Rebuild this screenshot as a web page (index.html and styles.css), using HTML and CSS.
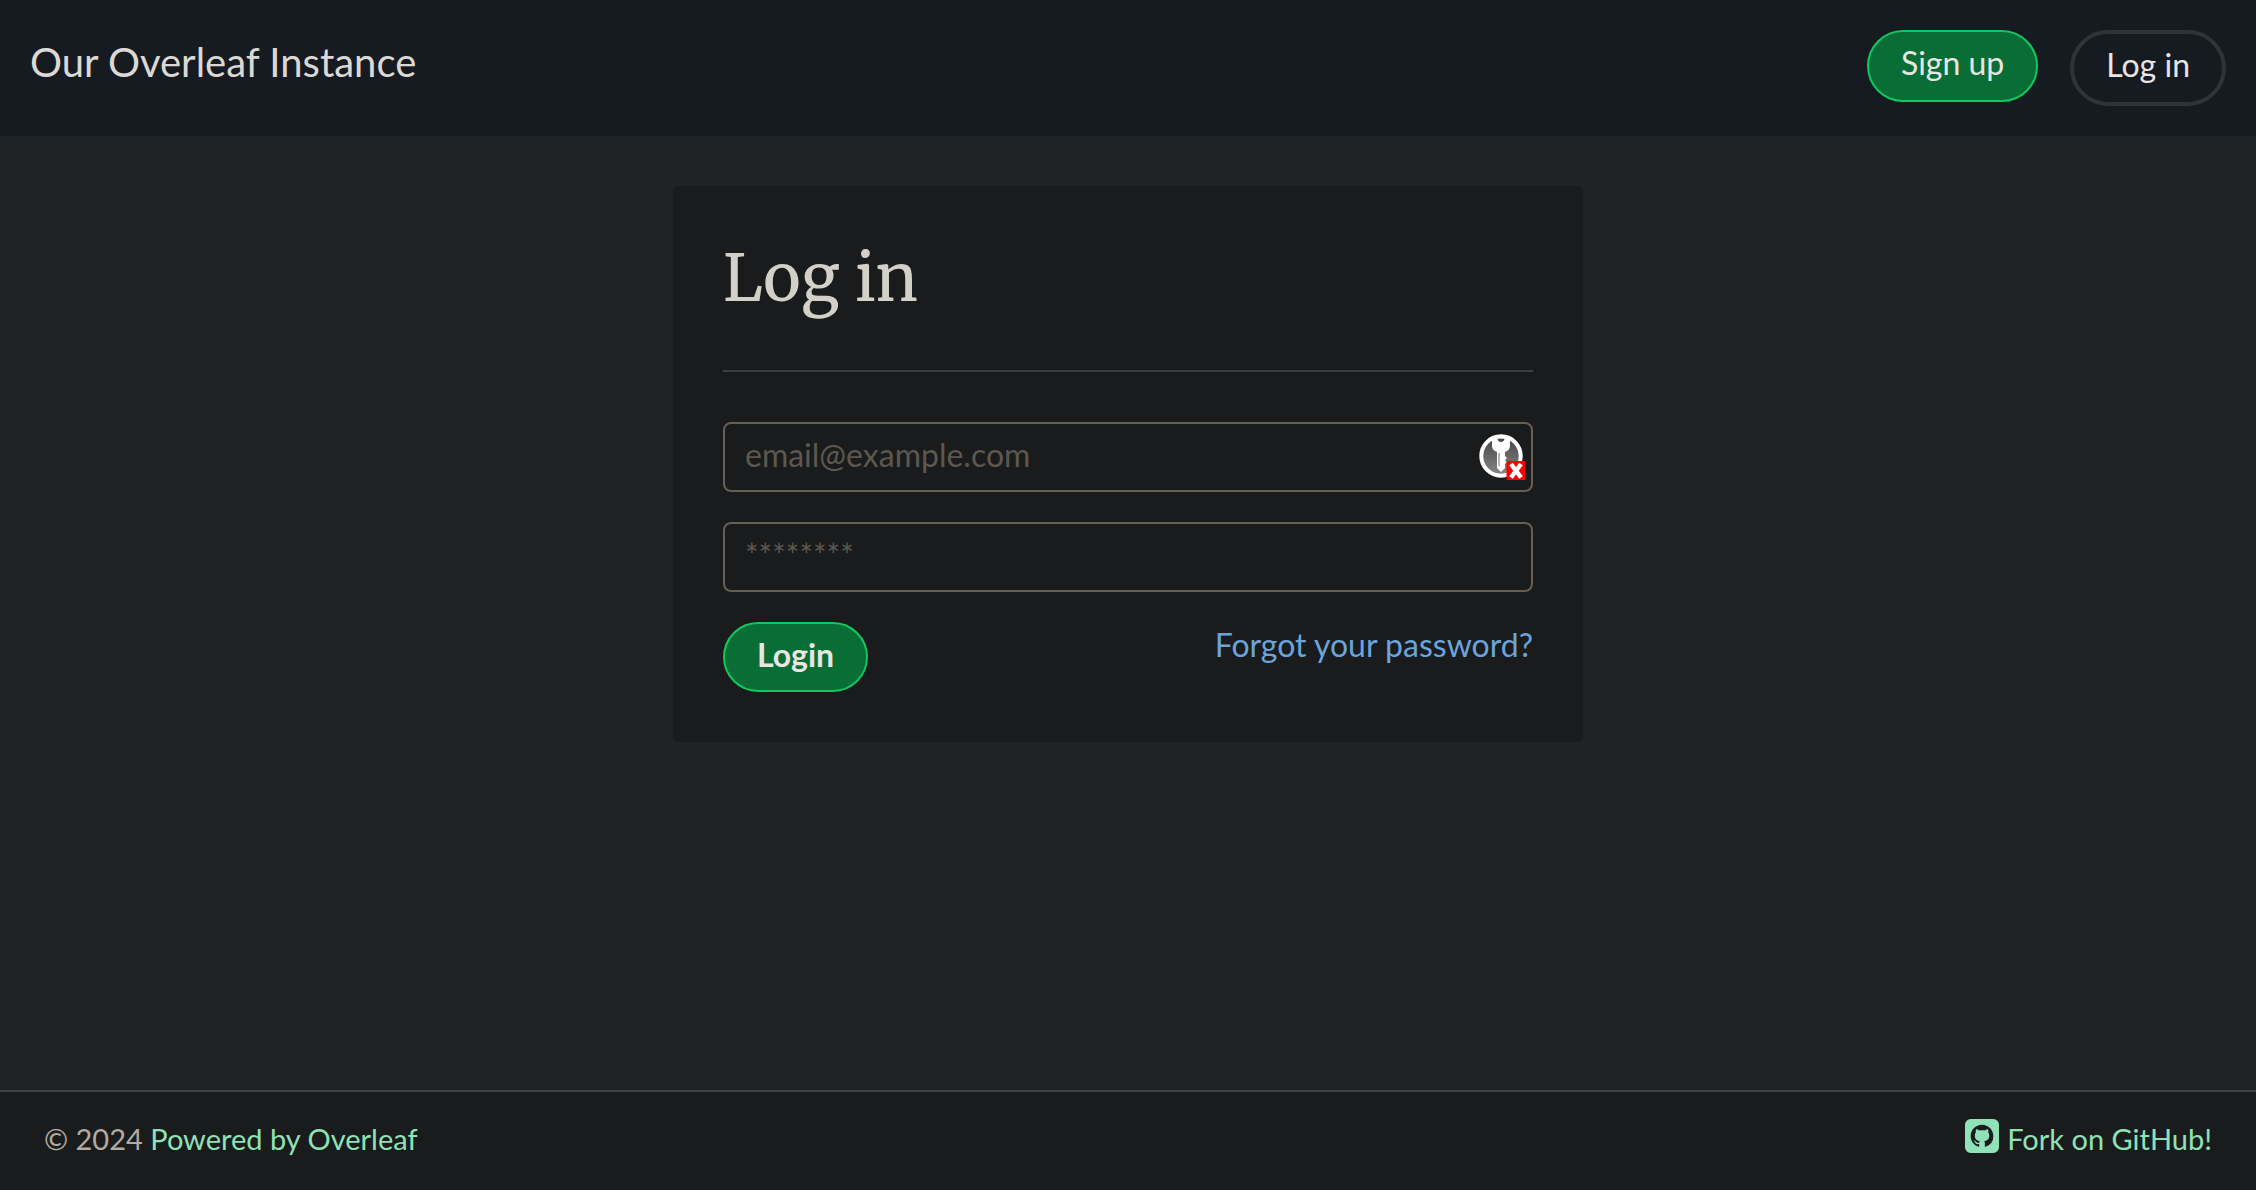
FILE: index.html
```html
<!DOCTYPE html>
<html lang="en">
<head>
	<meta charset="UTF-8">
	<meta name="viewport" content="width=device-width, initial-scale=1">
	<title>Log in - Our Overleaf Instance</title>
	<link rel="stylesheet" href="styles.css">
</head>
<body>
<header class="navbar">
	<a class="navbar-title" href="#">Our Overleaf Instance</a>
	<nav class="navbar-links">
		<a class="btn btn-primary" href="#">Sign up</a>
		<a class="btn btn-outline" href="#">Log in</a>
	</nav>
</header>
<main class="content">
	<div class="card">
		<div class="page-header">
			<h1>Log in</h1>
		</div>
		<form class="login-form">
			<div class="form-group">
				<input class="form-control" type="email" name="email" placeholder="email@example.com" aria-label="Email">
				<svg class="key-icon" viewBox="0 0 48 48" aria-hidden="true">
					<defs>
						<linearGradient id="key-bg" x1="0" y1="0" x2="0" y2="1">
							<stop offset="0" stop-color="#444"/>
							<stop offset="1" stop-color="#888"/>
						</linearGradient>
					</defs>
					<circle cx="22" cy="22" r="19.7" fill="url(#key-bg)" stroke="#fff" stroke-width="4"/>
					<path fill="#fff" fill-rule="evenodd" d="M13 4h18v8c0 3-2 5-5 6v4l2 2-2 2 2 2-2 2v4l-4 4-4-4V18c-3-1-5-3-5-6zM18.500 4.500c0 2 1.500 3.500 3.500 3.500s3.500-1.500 3.500-3.500zM19.500 19v13h1V19z"/>
					<rect x="27.500" y="27" width="18.500" height="19" fill="#f00"/>
					<path d="M32 30l10 13.500M42 30L32 43.500" stroke="#fff" stroke-width="4.500"/>
				</svg>
			</div>
			<div class="form-group">
				<input class="form-control" type="password" name="password" placeholder="********" aria-label="Password">
			</div>
			<div class="actions">
				<button class="btn btn-primary btn-submit" type="submit">Login</button>
				<a class="forgot" href="#">Forgot your password?</a>
			</div>
		</form>
	</div>
</main>
<footer class="site-footer">
	<div>© 2024 <a href="#">Powered by Overleaf</a></div>
	<a class="fork" href="#">
		<svg class="github-icon" viewBox="0 0 24 24" aria-hidden="true">
			<path fill="currentColor" fill-rule="evenodd" d="M4 0h16a4 4 0 0 1 4 4v16a4 4 0 0 1-4 4H4a4 4 0 0 1-4-4V4a4 4 0 0 1 4-4zM12 4C7.58 4 4 7.58 4 12c0 3.54 2.29 6.53 5.47 7.59.4.07.55-.17.55-.38 0-.19-.01-.82-.01-1.49-2.01.37-2.53-.49-2.69-.94-.09-.23-.48-.94-.82-1.13-.28-.15-.68-.52-.01-.53.63-.01 1.08.58 1.23.82.72 1.21 1.87.87 2.33.66.07-.52.28-.87.51-1.07-1.78-.2-3.64-.89-3.64-3.95 0-.87.31-1.59.82-2.15-.08-.2-.36-1.02.08-2.12 0 0 .67-.21 2.2.82.64-.18 1.32-.27 2-.27.68 0 1.36.09 2 .27 1.53-1.04 2.2-.82 2.2-.82.44 1.1.16 1.92.08 2.12.51.56.82 1.27.82 2.15 0 3.07-1.87 3.75-3.65 3.95.29.25.54.73.54 1.48 0 1.07-.01 1.93-.01 2.2 0 .21.15.46.55.38A8.013 8.013 0 0 0 20 12c0-4.42-3.58-8-8-8z"/>
		</svg>
		Fork on GitHub!
	</a>
</footer>
</body>
</html>
```
FILE: styles.css
```css
*{box-sizing:border-box;}
body{display:flex;flex-direction:column;min-height:100vh;margin:0;background:#1f2122;color:#b2aba1;font:32px/50px Lato,"Liberation Sans",sans-serif;}
a{text-decoration:none;}

.navbar{display:flex;justify-content:space-between;align-items:flex-start;padding:30px;background:#161b22;}
.navbar-title{color:#dcd9d4;font-size:40px;line-height:64px;}
.navbar-links{display:flex;align-items:flex-start;gap:32px;}

.btn{display:block;padding:6px 32px 12px;border:2px solid;border-radius:38px;color:#e8e6e3;font:inherit;cursor:pointer;}
.btn-primary{background:#096e36;border-color:#12c75f;}
.btn-outline{border-width:4px;border-color:#313436;}
.btn-submit{height:70px;font-weight:700;}

.content{flex:1;padding:50px 30px;}
.card{max-width:910px;margin:0 auto;padding:50px;background:#1a1b1c;border-radius:6px;}
.page-header{padding-bottom:50px;margin-bottom:50px;border-bottom:2px solid #3a3e40;}
h1{margin:0;color:#d3cfc9;font:400 64px/84px Merriweather,"Liberation Serif",serif;}

.form-group{position:relative;margin-bottom:30px;}
.form-control{display:block;width:100%;height:70px;padding:6px 20px 12px;border:2px solid #675f54;border-radius:8px;background:#1a1b1c;color:#d3cfc9;font:inherit;}
.form-control::placeholder{color:#5c5850;opacity:1;}
.key-icon{position:absolute;top:12px;right:6px;width:48px;height:48px;}
.actions{display:flex;justify-content:space-between;align-items:flex-start;}
.forgot{color:#6ba4da;line-height:46px;}

.site-footer{display:flex;justify-content:space-between;align-items:center;height:100px;padding:0 44px 4px;border-top:2px solid #3e4245;background:#1a1b1c;font-size:29px;}
.site-footer a{color:#8fe2b6;}
.fork{display:flex;align-items:center;gap:8px;}
.github-icon{width:34px;height:34px;margin-bottom:6px;}
```
